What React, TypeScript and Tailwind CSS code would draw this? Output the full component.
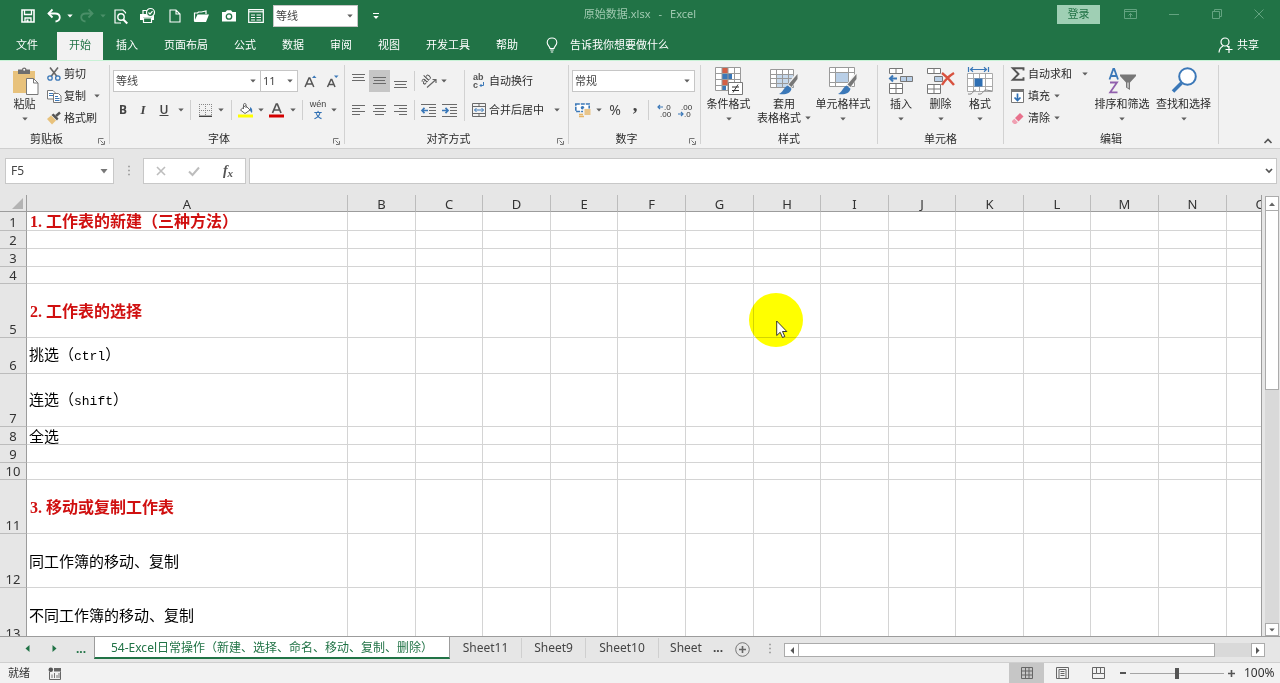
import React from "react";

type Kids = { children?: React.ReactNode };

const Caret = ({ className = "text-[#5f5f5f]" }: { className?: string }) => (
  <svg width="6" height="4" viewBox="0 0 6 4" className={`shrink-0 ${className}`} aria-hidden="true">
    <path d="M.3 .5h5.400L3 3.500z" fill="currentColor" />
  </svg>
);

const Draw = ({ w, h, children }: { w: number; h: number } & Kids) => (
  <svg width={w} height={h} viewBox={`0 0 ${w} ${h}`} fill="none" className="shrink-0 overflow-visible" aria-hidden="true">
    {children}
  </svg>
);

const Btn = ({ label, className = "", children }: { label: string; className?: string } & Kids) => (
  <button type="button" aria-label={label} className={`flex h-full shrink-0 items-center justify-center ${className}`}>
    {children}
  </button>
);

const Sep = ({ className = "mx-1" }: { className?: string }) => (
  <div className={`h-5 w-px shrink-0 bg-[#cfcfcf] ${className}`} />
);

const Divider = () => <div className="my-1 w-px shrink-0 bg-[#d2d2d2]" />;

const Combo = ({ label, value, className = "" }: { label: string; value: string; className?: string }) => (
  <div className={`relative h-[22px] shrink-0 border border-[#c6c6c6] bg-white ${className}`}>
    <select aria-label={label} className="h-full w-full appearance-none bg-transparent pl-[2px] text-[11px] leading-4 text-[#444] outline-none">
      <option>{value}</option>
    </select>
    <div className="pointer-events-none absolute inset-y-0 right-1 flex items-center">
      <Caret />
    </div>
  </div>
);

const Group = ({ label, launcher, className = "", children }: { label: string; launcher?: boolean; className?: string } & Kids) => (
  <section aria-label={label} className={`flex shrink-0 flex-col ${className}`}>
    <div className="flex min-h-0 flex-1">{children}</div>
    <div className="flex h-[18px] shrink-0 items-center">
      <span className="flex-1 text-center leading-4">{label}</span>
      {launcher && (
        <Btn label={`${label}设置`} className="w-4 pt-1">
          <Draw w={7} h={7}>
            <path d="M.5 5.500V.5h5M2.500 2.500l3 3M6.500 3v3.500H3" stroke="#777" />
          </Draw>
        </Btn>
      )}
    </div>
  </section>
);

const BigButton = ({ lines, icon, className = "" }: { lines: string[]; icon: React.ReactNode; className?: string }) => (
  <button type="button" className={`flex shrink-0 flex-col items-center pt-[6px] whitespace-nowrap ${className}`}>
    {icon}
    <span className="mt-[2px] leading-[14px]">{lines[0]}</span>
    {lines[1] ? (
      <span className="flex items-center gap-1 leading-[14px]">
        {lines[1]}
        <Caret />
      </span>
    ) : (
      <span className="mt-[6px]">
        <Caret />
      </span>
    )}
  </button>
);

/* Icons: quick access toolbar */
const SaveIcon = () => (
  <Draw w={14} h={14}>
    <path d="M1 1h12v12H1z" stroke="#fff" strokeWidth="1.600" />
    <path d="M3.500 1v4.500h7V1M4 13V9h6v4" stroke="#fff" strokeWidth="1.300" />
    <path d="M5.500 10.500h2V13h-2z" fill="#fff" />
  </Draw>
);
const UndoIcon = () => (
  <Draw w={14} h={14}>
    <path d="M1.500 4.500H8c3 0 4.800 1.600 4.800 3.800S11 12.200 8.500 12.500" stroke="#fff" strokeWidth="1.800" />
    <path d="M5.500 .5l-4 4 4 4" stroke="#fff" strokeWidth="1.800" />
  </Draw>
);
const RedoIcon = () => (
  <Draw w={14} h={14}>
    <path d="M12.500 4.500H6C3 4.500 1.200 6.100 1.200 8.300S3 12.200 5.500 12.500M8.500 .5l4 4-4 4" stroke="#4a8f68" strokeWidth="1.800" />
  </Draw>
);
const PreviewIcon = () => (
  <Draw w={14} h={15}>
    <path d="M11.500 4.500V3.500L9 1H1v13h6" stroke="#fff" strokeWidth="1.200" />
    <circle cx="7" cy="8" r="3.200" stroke="#fff" strokeWidth="1.400" />
    <path d="M9.300 10.500l4 4" stroke="#fff" strokeWidth="2" />
  </Draw>
);
const PrintIcon = () => (
  <Draw w={17} h={16}>
    <path d="M1 6h14v6h-2V9.500H4V12H1z" fill="#fff" />
    <path d="M4.500 10h8v4.500h-8zM4 6V2.500h4" fill="#217346" stroke="#fff" strokeWidth="1.200" />
    <circle cx="11.500" cy="4.500" r="4" fill="#217346" stroke="#fff" strokeWidth="1.200" />
    <path d="M9.500 4.500l1.500 1.600 2.500-3" stroke="#fff" strokeWidth="1.200" />
  </Draw>
);
const NewIcon = () => (
  <Draw w={12} h={14}>
    <path d="M1 1h6l4 4v8H1zM7 1v4h4" stroke="#fff" strokeWidth="1.100" />
  </Draw>
);
const OpenIcon = () => (
  <Draw w={17} h={13}>
    <path d="M1.500 11V3h3l1-1h3l4.500-1v3" stroke="#fff" strokeWidth="1.200" />
    <path d="M4.500 4.500H16l-3 7.500H1z" fill="#fff" />
  </Draw>
);
const CameraIcon = () => (
  <Draw w={16} h={12}>
    <path d="M1 2h3.500L6 .3h4L11.500 2H15v9.500H1z" fill="#fff" />
    <circle cx="8" cy="6.500" r="2.700" fill="#fff" stroke="#217346" strokeWidth="1.300" />
  </Draw>
);
const FormIcon = () => (
  <Draw w={16} h={14}>
    <path d="M.7.700h14.600v12.600H.7z" stroke="#fff" strokeWidth="1.200" />
    <path d="M1 2.800h14" stroke="#fff" strokeWidth="1.200" />
    <path d="M3 6h4M3 8.500h4M3 11h4M8.500 6H13M8.500 8.500H13M8.500 11H13" stroke="#fff" strokeWidth="1.200" />
  </Draw>
);

/* Icons: clipboard */
const PasteIcon = () => (
  <Draw w={26} h={28}>
    <path d="M1 4h22v22H1z" fill="#e8c27c" />
    <path d="M6 2.500h4C10-.2 14.500-.2 14.500 2.500H18V7H6z" fill="#6e6e6e" />
    <circle cx="12.200" cy="2.700" r="1" fill="#fff" />
    <path d="M14.500 11.500h7l4.500 4.500v11.500H14.500z" fill="#fff" stroke="#777" />
    <path d="M21.500 11.500V16H26" stroke="#777" />
  </Draw>
);
const CutIcon = () => (
  <Draw w={14} h={14}>
    <path d="M3 .5l7 9M11 .5l-7 9" stroke="#666" strokeWidth="1.600" />
    <circle cx="3" cy="11" r="2.200" stroke="#3b78b8" strokeWidth="1.300" />
    <circle cx="10.800" cy="11" r="2.200" stroke="#3b78b8" strokeWidth="1.300" />
  </Draw>
);
const CopyIcon = () => (
  <Draw w={15} h={13}>
    <path d="M.5.500H6L8 2.500V9H.5z" fill="#fff" stroke="#777" />
    <path d="M2 3.500h4M2 5.500h4" stroke="#3b78b8" />
    <path d="M6.500 3.500h5l2.500 2.500v6.500H6.500z" fill="#fff" stroke="#777" />
    <path d="M8 6.500h3M8 8.500h4.500M8 10.500h4.500" stroke="#3b78b8" />
  </Draw>
);
const BrushIcon = () => (
  <Draw w={14} h={13}>
    <path d="M0 7l4-3.500 5 5-4 4z" fill="#e8c27c" />
    <path d="M4.500 3l2-1.500 5 5L10 8.500z" fill="#555" />
    <path d="M9 4l4-3.500" stroke="#555" strokeWidth="2.400" />
  </Draw>
);

/* Icons: font */
const BorderIcon = () => (
  <Draw w={13} h={13}>
    <path d="M.5 0v12M12.500 0v12M6.500 0v12M0 .5h13M0 6.500h13" stroke="#888" strokeDasharray="1 1" />
    <path d="M0 12.300h13" stroke="#444" strokeWidth="1.400" />
  </Draw>
);
const FillIcon = () => (
  <Draw w={16} h={15}>
    <path d="M2.500 7l5-4.500 4.500 4.500-5 3.500z" fill="#fff" stroke="#666" />
    <path d="M5.500 6V1.500c0-1.300 2.500-1.300 2.500 0V5" stroke="#666" />
    <path d="M12 4c2.200 1 2.600 3 2 6-1.200-.8-1.800-2-2-3z" fill="#3b78b8" />
    <path d="M0 11.500h15v3H0z" fill="#ffff00" />
  </Draw>
);
const FontColorIcon = () => (
  <Draw w={16} h={15}>
    <path d="M3.500 10L7.300 1h1L12 10M5 7h5.600" stroke="#555" strokeWidth="1.700" />
    <path d="M0 11.500h15v3H0z" fill="#d40000" />
  </Draw>
);

/* Icons: alignment */
const Lines = ({ spans, h }: { spans: [number, number][]; h: number }) => (
  <Draw w={13} h={h}>
    {spans.map(([a, b], i) => (
      <path key={i} d={`M${a} ${i * 3 + 1.5}H${b}`} stroke="#6a6a6a" />
    ))}
  </Draw>
);
const OrientIcon = () => (
  <Draw w={18} h={18}>
    <g transform="rotate(-45 7 9)">
      <text x="2" y="10" fontSize="10" fontFamily="Liberation Sans" fill="#444">ab</text>
    </g>
    <path d="M7 15.500l9-8M12.500 7.500H16V11" stroke="#666" strokeWidth="1.200" />
  </Draw>
);
const Indent = ({ out }: { out?: boolean }) => (
  <Draw w={15} h={13}>
    <path d="M0 .5h15M8 3.500h7M8 6.500h7M8 9.500h7M0 12.500h15" stroke="#6a6a6a" />
    <path d={out ? "M7 6.500H1M3.500 3.800L1 6.500l2.500 2.700" : "M0 6.500h6M3.500 3.800L6 6.500 3.500 9.200"} stroke="#3b78b8" strokeWidth="1.700" />
  </Draw>
);
const WrapIcon = () => (
  <Draw w={13} h={20}>
    <text x="1" y="9" fontSize="9" fontFamily="Liberation Sans" fontWeight="600" fill="#555">ab</text>
    <text x="1" y="17" fontSize="9" fontFamily="Liberation Sans" fontWeight="600" fill="#555">c</text>
    <path d="M11.500 11v3.500H8M9.500 13L8 14.500 9.500 16" stroke="#3b78b8" />
  </Draw>
);
const MergeIcon = () => (
  <Draw w={14} h={14}>
    <path d="M.5.500h13v13H.5zM.5 3.500h13M.5 10.500h13M7 .5v3M7 10.500v3" stroke="#6a6a6a" />
    <path d="M2.500 7h9M4.500 5L2.500 7l2 2M9.500 5l2 2-2 2" stroke="#3b78b8" />
  </Draw>
);

/* Icons: number */
const MoneyIcon = () => (
  <Draw w={16} h={15}>
    <path d="M.8 1h13.400v7.500H.8z" fill="#fff" stroke="#3b78b8" strokeWidth="1.600" strokeDasharray="4 1" />
    <circle cx="7.500" cy="4.700" r="1.800" fill="#3b78b8" />
    <path d="M8 5.500h8V14H8zM3 9.800h5V15H3z" fill="#f2f2f2" />
    <path d="M9.500 7h6M9.500 9h6M9.500 11h6M4 11.500h4M4 13.500h5" stroke="#e5b567" strokeWidth="1.400" />
  </Draw>
);
const Decimal = ({ less }: { less?: boolean }) => (
  <Draw w={15} h={17}>
    <text x={less ? 3 : 7} y="8" fontSize="8" fontFamily="Liberation Sans" fill="#333">{less ? ".00" : ".0"}</text>
    <text x={less ? 6 : 3} y="15" fontSize="8" fontFamily="Liberation Sans" fill="#333">{less ? ".0" : ".00"}</text>
    <path d={less ? "M0 12h5M3 10l2 2-2 2" : "M6 5H1M3 3L1 5l2 2"} stroke="#3b78b8" strokeWidth="1.200" />
  </Draw>
);

/* Icons: styles and cells */
const CondIcon = () => (
  <Draw w={28} h={28}>
    <path d="M.5.500h25v23H.5z" fill="#fff" />
    <path d="M7 1h6v5H7zM7 13h6v5H7z" fill="#d35f45" />
    <path d="M7 7h10v5H7zM7 19h4v5H7z" fill="#3b78b8" />
    <path d="M.5.500h25v23H.5zM7 .5v23M19.500 .5v23M.5 6.500h25M.5 12.500h25M.5 18.500h25M13 .5v23" stroke="#9a9a9a" />
    <path d="M13.500 15.500h14v12h-14z" fill="#fff" stroke="#777" />
    <path d="M17 20h7M17 23.500h7M23 17.500l-5 8" stroke="#333" />
  </Draw>
);
const BigBrush = () => (
  <>
    <path d="M27 8.500l-7.500 11" stroke="#f2f2f2" strokeWidth="5" />
    <path d="M27.500 7v5l-6 8-3-2.500z" fill="#777" />
    <path d="M17.500 18.500l4 3.200c-1 4.800-6 6.300-12.500 5.300 4-1.500 4.500-6.500 8.500-8.500z" fill="#3b78b8" />
  </>
);
const TableStyleIcon = () => (
  <Draw w={28} h={28}>
    <path d="M.5 2.500h23v18H.5z" fill="#fff" />
    <path d="M6 7h18v14H6z" fill="#c7d9ec" />
    <path d="M.5 2.500h23v18H.5zM6.500 2.500v18M12.500 2.500v18M18.500 2.500v18M.5 7.500h23M.5 11.500h23M.5 16.500h23" stroke="#999" />
    <BigBrush />
  </Draw>
);
const CellStyleIcon = () => (
  <Draw w={28} h={28}>
    <path d="M.5.500h25v19H.5z" fill="#fff" />
    <path d="M.5.500h25v19H.5zM6.500 .5v19M19.500 .5v19M.5 5.500h25M.5 15.500h25" stroke="#9a9a9a" />
    <path d="M6.500 5.500h13v10h-13z" fill="#b9cfe7" stroke="#9a9a9a" />
    <BigBrush />
  </Draw>
);
const InsertIcon = () => (
  <Draw w={26} h={28}>
    <path d="M1.500 1.500h13v5h-13zM8 1.500v5M1.500 16.500h13v10h-13zM8 16.500v10M1.500 21.500h13" fill="#fff" stroke="#777" />
    <path d="M12.500 9.500h12v5h-12zM18.500 9.500v5" fill="#b9cfe7" stroke="#777" />
    <path d="M9 11.500H2.500M5 8.500l-3 3 3 3" stroke="#3b78b8" strokeWidth="2" />
  </Draw>
);
const DeleteIcon = () => (
  <Draw w={28} h={28}>
    <path d="M.5 1.500h13v5H.5zM7 1.500v5M.5 17.500h13v9H.5zM7 17.500v9M.5 22h13" fill="#fff" stroke="#777" />
    <path d="M7.500 9.500h8v5h-8z" fill="#b9cfe7" stroke="#777" />
    <path d="M15 6c4 3 8 7 12 12M27 6c-5 3-9 7-12 12" stroke="#d8523f" strokeWidth="2.400" />
  </Draw>
);
const FormatIcon = () => (
  <Draw w={28} h={28}>
    <path d="M2.500 0v5M22.500 0v5M4 2.500h17M7 .3L4.500 2.500 7 4.700M18 .3l2.500 2.200L18 4.700" stroke="#3b78b8" strokeWidth="1.200" />
    <path d="M1.500 6.500h25v18h-25z" fill="#fff" />
    <path d="M1.500 6.500h25v18h-25zM7.500 6.500v18M19.500 6.500v18M13.500 6.500v18M1.500 11.500h25M1.500 19.500h25" stroke="#aaa" />
    <path d="M8.500 11.500h8v8h-8z" fill="#2f6fb3" />
    <path d="M2 27c6 1 4-4 8-4M12 27c6 1 4-4 8-4l6 1" stroke="#888" />
  </Draw>
);

/* Icons: editing */
const SumIcon = () => (
  <Draw w={14} h={14}>
    <path d="M12.500 3.500V1.200H1.800L7.500 7l-5.700 5.800h10.700v-2.500" stroke="#555" strokeWidth="1.900" />
  </Draw>
);
const DownIcon = () => (
  <Draw w={13} h={14}>
    <path d="M.5.500h12v13H.5z" fill="#fff" stroke="#777" />
    <path d="M0 0h13v3H0z" fill="#777" />
    <path d="M6.500 4.500v7M3.500 8.500l3 3 3-3" stroke="#2f6fb3" strokeWidth="1.700" />
  </Draw>
);
const EraserIcon = () => (
  <Draw w={14} h={13}>
    <path d="M4 6l5-5 3.500 3.500-5 5z" fill="#e8718c" />
    <path d="M3.300 6.700l3.500 3.500L5 12H3L1 10V9z" fill="#f0a0b2" />
  </Draw>
);
const SortIcon = () => (
  <Draw w={28} h={28}>
    <path d="M1.500 12.500L5.300 2h.9L10 12.500M2.800 9h6" stroke="#3b78b8" strokeWidth="1.800" />
    <path d="M2 15.500h7L2.200 25.300h7.300" stroke="#9160ad" strokeWidth="1.800" />
    <path d="M12 7.500h16V9l-6 6.500V23l-4-2.500v-5L12 9z" fill="#777" />
    <path d="M19.500 15.500v5l1 .6v-5.600z" fill="#fff" />
  </Draw>
);
const FindIcon = () => (
  <Draw w={28} h={28}>
    <path d="M11.500 16L3 24.500" stroke="#3b78b8" strokeWidth="3.600" />
    <circle cx="17.500" cy="9.500" r="8.300" fill="#fff" stroke="#3b78b8" strokeWidth="2" />
  </Draw>
);

const menuTabs = ["插入", "页面布局", "公式", "数据", "审阅", "视图", "开发工具", "帮助"];

const W68 = "w-[68px]";
const W67 = "w-[67px]";
const columns: [string, string][] = [
  ["A", "w-[321px]"], ["B", W68], ["C", W67], ["D", W68], ["E", W67], ["F", W68], ["G", W68], ["H", W67],
  ["I", W68], ["J", W67], ["K", W68], ["L", W67], ["M", W68], ["N", W68], ["O", W68],
];

const SHORT = "h-[18px]";
const TALL = "h-[54px]";
type Row = { h: string; head?: [string, string]; text?: React.ReactNode };
const Latin = ({ children }: Kids) => <span className="font-['Liberation_Mono',monospace] text-[13px]">{children}</span>;
const rows: Row[] = [
  { h: SHORT, head: ["1. ", "工作表的新建（三种方法）"] },
  { h: SHORT },
  { h: SHORT },
  { h: "h-[17px]" },
  { h: TALL, head: ["2. ", "工作表的选择"] },
  { h: "h-[36px]", text: <>挑选（<Latin>ctrl</Latin>）</> },
  { h: "h-[53px]", text: <>连选（<Latin>shift</Latin>）</> },
  { h: SHORT, text: "全选" },
  { h: SHORT },
  { h: "h-[17px]" },
  { h: TALL, head: ["3. ", "移动或复制工作表"] },
  { h: TALL, text: "同工作簿的移动、复制" },
  { h: TALL, text: "不同工作簿的移动、复制" },
];

function TitleBar() {
  return (
    <header className="grid h-8 shrink-0 grid-cols-[1fr_auto_1fr] text-[#9fc9b0]">
      <div className="flex items-center pl-[14px]">
        <Btn label="保存" className="w-[27px]"><SaveIcon /></Btn>
        <Btn label="撤消" className="w-[25px]"><UndoIcon /></Btn>
        <Btn label="撤消列表" className="w-2"><Caret className="text-white" /></Btn>
        <Btn label="恢复" className="w-[25px]"><RedoIcon /></Btn>
        <Btn label="恢复列表" className="w-2"><Caret className="text-[#4a8f68]" /></Btn>
        <Btn label="打印预览" className="w-[27px]"><PreviewIcon /></Btn>
        <Btn label="快速打印" className="w-[27px]"><PrintIcon /></Btn>
        <Btn label="新建" className="w-[27px]"><NewIcon /></Btn>
        <Btn label="打开" className="w-[27px]"><OpenIcon /></Btn>
        <Btn label="照相机" className="w-[27px]"><CameraIcon /></Btn>
        <Btn label="记录单" className="w-[27px]"><FormIcon /></Btn>
        <Combo label="快速字体" value="等线" className="ml-1 w-[85px]" />
        <Btn label="自定义快速访问工具栏" className="w-9">
          <Draw w={6} h={6}>
            <path d="M0 .5h6" stroke="#fff" />
            <path d="M.3 3h5.400L3 6z" fill="#fff" />
          </Draw>
        </Btn>
      </div>
      <h1 className="flex items-center gap-2 pb-1 text-[11px]">
        <span>原始数据.xlsx</span>
        <span>-</span>
        <span>Excel</span>
      </h1>
      <div className="flex items-center justify-end pb-1">
        <button type="button" className="mr-2 h-[19px] w-[43px] bg-[#9fcfb4] text-[11px] text-[#217346]">登录</button>
        <Btn label="功能区显示选项" className="w-[44px]">
          <Draw w={13} h={10}>
            <path d="M.5.500h12v9H.5zM.5 2.500h12M6.500 8.500V4.500M4.500 6.500l2-2 2 2" stroke="#63a380" />
          </Draw>
        </Btn>
        <Btn label="最小化" className="w-[43px]">
          <Draw w={10} h={1}><path d="M0 .5h10" stroke="#63a380" /></Draw>
        </Btn>
        <Btn label="向下还原" className="w-[43px]">
          <Draw w={10} h={10}><path d="M.5 2.500h7v7h-7zM2.500 2.500v-2h7v7h-2" stroke="#63a380" /></Draw>
        </Btn>
        <Btn label="关闭" className="w-[42px]">
          <Draw w={10} h={10}><path d="M.5.500l9 9M9.500 .5l-9 9" stroke="#63a380" /></Draw>
        </Btn>
      </div>
    </header>
  );
}

function MenuTabs() {
  return (
    <nav className="flex h-7 shrink-0 items-center pb-[2px] text-white">
      <button type="button" className="w-[57px] pr-[3px]">文件</button>
      <button type="button" className="-mb-[2px] h-7 w-[46px] bg-[#f2f2f2] pb-[2px] text-[#217346]">开始</button>
      {menuTabs.map((t) => (
        <button type="button" key={t} className="px-[13px]">{t}</button>
      ))}
      <button type="button" className="flex items-center gap-3 pl-[15px]">
        <Draw w={12} h={16}>
          <path d="M4 11.500c0-2-2.800-3-2.800-6C1.200 2.800 3.400 1 6 1s4.800 1.800 4.800 4.500c0 3-2.800 4-2.800 6zM4.200 13h3.600M4.800 15h2.400" stroke="#fff" strokeWidth="1.100" />
        </Draw>
        告诉我你想要做什么
      </button>
      <button type="button" className="ml-auto flex items-center gap-1 pr-[21px]">
        <Draw w={15} h={16}>
          <circle cx="7" cy="5" r="4" stroke="#fff" strokeWidth="1.200" />
          <path d="M1 15.500c.3-3.500 2-5.500 4-6.500M9 9l2 1.500M7.500 12.500h7M11 9v7" stroke="#fff" strokeWidth="1.200" />
        </Draw>
        共享
      </button>
    </nav>
  );
}

function Ribbon() {
  return (
    <div className="flex h-[89px] shrink-0 border-t border-b border-t-[#c8f2d6] border-b-[#cfcfcf] bg-[#f2f2f2] text-[#2b2b2b]">
      <Group label="剪贴板" launcher className="w-[109px]">
        <BigButton lines={["粘贴"]} icon={<PasteIcon />} className="w-[47px] pl-[2px]" />
        <div className="flex flex-col pt-[2px]">
          {([["剪切", <CutIcon />], ["复制", <CopyIcon />], ["格式刷", <BrushIcon />]] as [string, React.ReactNode][]).map(([t, icon]) => (
            <button type="button" key={t} className="flex h-[22px] items-center whitespace-nowrap">
              <span className="flex w-[17px]">{icon}</span>
              {t}
              {t === "复制" && <span className="ml-2"><Caret /></span>}
            </button>
          ))}
        </div>
      </Group>
      <Divider />
      <Group label="字体" launcher className="w-[234px]">
        <div className="flex flex-col gap-[7px] pt-[9px] pl-[3px]">
          <div className="flex h-[22px] items-center">
            <Combo label="字体名称" value="等线" className="w-[148px]" />
            <Combo label="字号" value="11" className="-ml-px w-[38px]" />
            <Btn label="增大字号" className="w-6">
              <Draw w={13} h={14}>
                <path d="M1 13L5 4h.8l4 9M2.500 10h5.800" stroke="#555" strokeWidth="1.500" />
                <path d="M8 4l2.200-2.500L12.500 4z" fill="#3b78b8" />
              </Draw>
            </Btn>
            <Btn label="减小字号" className="w-[20px]">
              <Draw w={13} h={14}>
                <path d="M1.500 13L5 5.500h.8L9 13M2.800 10.500h5" stroke="#555" strokeWidth="1.500" />
                <path d="M8 1.500h4.500L10.200 4z" fill="#3b78b8" />
              </Draw>
            </Btn>
          </div>
          <div className="flex h-[22px] items-center text-[12px] text-[#444]">
            <Btn label="加粗" className="w-5"><b>B</b></Btn>
            <Btn label="倾斜" className="w-5"><i className="font-['Liberation_Serif',serif] text-[13px] font-bold">I</i></Btn>
            <Btn label="下划线" className="w-[22px]"><span className="font-semibold underline">U</span></Btn>
            <Btn label="下划线样式" className="w-[11px]"><Caret /></Btn>
            <Sep />
            <Btn label="边框" className="w-5"><BorderIcon /></Btn>
            <Btn label="边框样式" className="w-3"><Caret /></Btn>
            <Sep />
            <Btn label="填充颜色" className="w-5"><FillIcon /></Btn>
            <Btn label="填充颜色列表" className="w-[10px]"><Caret /></Btn>
            <Btn label="字体颜色" className="w-[22px]"><FontColorIcon /></Btn>
            <Btn label="字体颜色列表" className="w-[10px]"><Caret /></Btn>
            <Sep />
            <Btn label="拼音指南" className="w-[22px] flex-col">
              <span className="font-['Liberation_Sans',sans-serif] text-[9px] leading-[10px]">wén</span>
              <span className="text-[8px] leading-[12px] font-bold text-[#2f6fb3]">文</span>
            </Btn>
            <Btn label="拼音列表" className="w-[10px]"><Caret /></Btn>
          </div>
        </div>
      </Group>
      <Divider />
      <Group label="对齐方式" launcher className="w-[223px]">
        <div className="flex flex-col gap-[7px] pt-[9px] pl-[3px]">
          <div className="flex h-[22px] items-center">
            <Btn label="顶端对齐" className="w-[21px] pb-2"><Lines h={9} spans={[[0, 13], [1, 12], [0, 13]]} /></Btn>
            <Btn label="垂直居中" className="w-[21px] bg-[#c6c6c6] pb-[2px]"><Lines h={9} spans={[[0, 13], [1, 12], [0, 13]]} /></Btn>
            <Btn label="底端对齐" className="w-[21px] pt-[6px]"><Lines h={9} spans={[[0, 13], [1, 12], [0, 13]]} /></Btn>
            <Sep className="mx-[3px]" />
            <Btn label="方向" className="w-[22px]"><OrientIcon /></Btn>
            <Btn label="方向列表" className="w-2"><Caret /></Btn>
          </div>
          <div className="flex h-[22px] items-center">
            <Btn label="左对齐" className="w-[21px]"><Lines h={12} spans={[[0, 13], [0, 8], [0, 13], [0, 8]]} /></Btn>
            <Btn label="居中" className="w-[21px]"><Lines h={12} spans={[[0, 13], [2, 11], [0, 13], [2, 11]]} /></Btn>
            <Btn label="右对齐" className="w-[21px]"><Lines h={12} spans={[[0, 13], [5, 13], [0, 13], [5, 13]]} /></Btn>
            <Sep className="mx-[3px]" />
            <Btn label="减少缩进量" className="w-[21px]"><Indent out /></Btn>
            <Btn label="增加缩进量" className="w-[21px]"><Indent /></Btn>
          </div>
        </div>
        <div className="mt-[9px] ml-1 h-[51px] w-px bg-[#d2d2d2]" />
        <div className="flex flex-col gap-[7px] pt-[9px] pl-[3px]">
          <button type="button" className="flex h-[22px] items-center whitespace-nowrap">
            <span className="flex w-[21px] justify-center"><WrapIcon /></span>
            自动换行
          </button>
          <button type="button" className="flex h-[22px] items-center whitespace-nowrap">
            <span className="flex w-[21px] justify-center"><MergeIcon /></span>
            合并后居中
            <span className="ml-[10px]"><Caret /></span>
          </button>
        </div>
      </Group>
      <Divider />
      <Group label="数字" launcher className="w-[131px]">
        <div className="flex flex-col gap-[7px] pt-[9px] pl-[3px]">
          <Combo label="数字格式" value="常规" className="w-[123px]" />
          <div className="flex h-[22px] items-center text-[#444]">
            <Btn label="会计数字格式" className="w-[22px]"><MoneyIcon /></Btn>
            <Btn label="会计格式列表" className="w-[9px]"><Caret /></Btn>
            <Btn label="百分比样式" className="w-6 text-[14px]">%</Btn>
            <Btn label="千位分隔样式" className="w-4 pb-[10px] font-['Liberation_Serif',serif] text-[19px] leading-4 font-bold">,</Btn>
            <Sep className="mx-[5px]" />
            <Btn label="增加小数位数" className="w-5"><Decimal /></Btn>
            <Btn label="减少小数位数" className="w-[22px]"><Decimal less /></Btn>
          </div>
        </div>
      </Group>
      <Divider />
      <Group label="样式" className="w-[176px]">
        <BigButton lines={["条件格式"]} icon={<CondIcon />} className="w-[55px]" />
        <BigButton lines={["套用", "表格格式"]} icon={<TableStyleIcon />} className="w-[56px]" />
        <BigButton lines={["单元格样式"]} icon={<CellStyleIcon />} className="w-[62px]" />
      </Group>
      <Divider />
      <Group label="单元格" className="w-[125px]">
        <BigButton lines={["插入"]} icon={<InsertIcon />} className="ml-[3px] w-10" />
        <BigButton lines={["删除"]} icon={<DeleteIcon />} className="w-[39px]" />
        <BigButton lines={["格式"]} icon={<FormatIcon />} className="w-10" />
      </Group>
      <Divider />
      <Group label="编辑" className="w-[214px]">
        <div className="flex w-[89px] flex-col pt-[2px] pl-[7px]">
          {([["自动求和", <SumIcon />], ["填充", <DownIcon />], ["清除", <EraserIcon />]] as [string, React.ReactNode][]).map(([t, icon], i) => (
            <button type="button" key={t} className="flex h-[22px] items-center whitespace-nowrap">
              <span className="flex w-[17px]">{icon}</span>
              {t}
              <span className={i === 0 ? "ml-[10px]" : "ml-1"}><Caret /></span>
            </button>
          ))}
        </div>
        <BigButton lines={["排序和筛选"]} icon={<SortIcon />} className="w-[58px]" />
        <BigButton lines={["查找和选择"]} icon={<FindIcon />} className="ml-[3px] w-[59px]" />
      </Group>
      <Divider />
      <div className="flex flex-1 items-end justify-end pr-2 pb-1">
        <button type="button" aria-label="折叠功能区">
          <Draw w={8} h={6}><path d="M.5 5L4 1.500 7.500 5" stroke="#555" strokeWidth="1.600" /></Draw>
        </button>
      </div>
    </div>
  );
}

function FormulaBar() {
  return (
    <div className="flex h-[46px] shrink-0 items-start bg-[#e6e6e6] pt-[9px] pr-[3px] pl-[5px]">
      <div className="flex h-[26px] w-[109px] items-center border border-[#c8c8c8] bg-white">
        <input aria-label="名称框" defaultValue="F5" className="w-0 flex-1 bg-transparent pl-[5px] text-[12px] text-[#444] outline-none" />
        <button type="button" aria-label="名称列表" className="flex w-[18px] justify-center">
          <svg width="8" height="5" viewBox="0 0 8 5" aria-hidden="true"><path d="M.5 0h7L4 4.500z" fill="#777" /></svg>
        </button>
      </div>
      <div className="flex h-[26px] w-[29px] items-center justify-center">
        <Draw w={2} h={12}><path d="M0 1.500h2M0 5.500h2M0 9.500h2" stroke="#a5a5a5" strokeWidth="1.600" /></Draw>
      </div>
      <div className="flex h-[26px] w-[103px] items-center border border-[#c8c8c8] bg-white">
        <Btn label="取消" className="w-[33px]">
          <Draw w={10} h={10}><path d="M1 1l8 8M9 1L1 9" stroke="#bdbdbd" strokeWidth="1.600" /></Draw>
        </Btn>
        <Btn label="输入" className="w-[34px]">
          <Draw w={12} h={10}><path d="M1 5.500L4.500 9 11 1.500" stroke="#bdbdbd" strokeWidth="2" /></Draw>
        </Btn>
        <Btn label="插入函数" className="w-[34px] font-['Liberation_Serif',serif] text-[#555] italic">
          <span className="text-[14px] font-bold">f</span>
          <span className="pt-1 text-[11px] font-bold">x</span>
        </Btn>
      </div>
      <div className="ml-[3px] flex h-[26px] min-w-0 flex-1 items-center border border-[#c8c8c8] bg-white">
        <input aria-label="编辑栏" className="min-w-0 flex-1 bg-transparent px-1 outline-none" />
        <button type="button" aria-label="展开编辑栏" className="flex w-[14px] justify-center">
          <Draw w={8} h={6}><path d="M1 1l3 3 3-3" stroke="#555" strokeWidth="1.700" /></Draw>
        </button>
      </div>
    </div>
  );
}

function Sheet() {
  return (
    <div className="relative flex min-h-0 flex-1 overflow-hidden bg-[#e6e6e6]">
      <div className="min-w-0 flex-1 overflow-hidden border-r border-[#9c9c9c]">
        <table className="w-[1295px] table-fixed border-separate border-spacing-0 bg-white font-['Noto_Sans','Noto_Sans_CJK_SC',sans-serif]">
          <colgroup>
            <col className="w-[27px]" />
            {columns.map(([c, w]) => <col key={c} className={w} />)}
          </colgroup>
          <thead>
            <tr className="h-[17px] bg-[#e6e6e6] text-[13px] leading-[14px] text-[#333]">
              <td className="border-r border-b border-[#9c9c9c] p-0 pr-[3px]">
                <div className="flex justify-end">
                  <Draw w={11} h={11}><path d="M11 0v11H0z" fill="#b3b3b3" /></Draw>
                </div>
              </td>
              {columns.map(([c]) => (
                <th key={c} scope="col" className="border-r border-b border-r-[#bcbcbc] border-b-[#9c9c9c] p-0 text-center align-bottom font-normal">{c}</th>
              ))}
            </tr>
          </thead>
          <tbody>
            {rows.map((r, i) => (
              <tr key={i} className={r.h}>
                <th scope="row" className="border-r border-b border-r-[#9c9c9c] border-b-[#bcbcbc] bg-[#e6e6e6] p-0 text-center align-bottom text-[13px] leading-4 font-normal text-[#333]">
                  {i + 1}
                </th>
                {columns.map(([c], k) => (
                  <td key={c} className={`border-r border-b border-[#d4d4d4] p-0 pl-[2px] align-middle text-[15px] leading-4 whitespace-nowrap text-black ${r.head ? "pt-px" : ""}`}>
                    {k === 0 && r.head && (
                      <span className="pl-px font-['Liberation_Serif','Noto_Sans_CJK_SC',serif] text-[16px] font-bold whitespace-pre text-[#d01010]">
                        {r.head[0]}{r.head[1]}
                      </span>
                    )}
                    {k === 0 && r.text}
                  </td>
                ))}
              </tr>
            ))}
          </tbody>
        </table>
      </div>
      <div className="mt-px mr-px ml-[3px] flex w-[14px] shrink-0 flex-col bg-[#d9d9d9]">
        <button type="button" aria-label="向上滚动" className="flex h-[15px] items-center justify-center border border-[#ababab] bg-white">
          <Draw w={6} h={4}><path d="M0 4h6L3 .5z" fill="#666" /></Draw>
        </button>
        <div className="h-[179px] border border-t-0 border-[#ababab] bg-white" />
        <button type="button" aria-label="向下滚动" className="mt-auto flex h-[13px] items-center justify-center border border-[#ababab] bg-white">
          <Caret />
        </button>
      </div>
      <div className="pointer-events-none absolute top-[98px] left-[749px] size-[54px] rounded-full bg-[#ffff00] mix-blend-multiply" />
      <div className="pointer-events-none absolute top-[125px] left-[776px]">
        <Draw w={12} h={19}>
          <path d="M.7 1v14.500l3.500-3.200 2.300 5.200 2.300-1-2.300-5h4.300z" fill="#fff" stroke="#222" strokeWidth=".9" />
        </Draw>
      </div>
    </div>
  );
}

function SheetTabs() {
  return (
    <div className="flex h-[26px] shrink-0 items-start border-t border-[#9c9c9c] bg-[#e6e6e6] text-[12px] text-[#444]">
      <div className="flex h-[23px] w-[94px] shrink-0 items-center pl-[14px]">
        <Btn label="上一张工作表" className="w-[27px]"><Draw w={5} h={7}><path d="M4.500 0v7L.5 3.500z" fill="#217346" /></Draw></Btn>
        <Btn label="下一张工作表" className="w-[27px]"><Draw w={5} h={7}><path d="M.5 0v7l4-3.500z" fill="#217346" /></Draw></Btn>
        <Btn label="更多工作表" className="w-[26px] font-bold text-[#217346]">...</Btn>
      </div>
      <button type="button" className="h-[22px] w-[356px] shrink-0 border-x border-b-2 border-x-[#9c9c9c] border-b-[#217346] bg-white pt-px whitespace-nowrap text-[#217346]">
        54-Excel日常操作（新建、选择、命名、移动、复制、删除）
      </button>
      <div className="flex h-[22px] items-center">
        <button type="button" className="w-[71px]">Sheet11</button>
        <Sep className="mx-0" />
        <button type="button" className="w-[63px]">Sheet9</button>
        <Sep className="mx-0" />
        <button type="button" className="w-[72px]">Sheet10</button>
        <Sep className="mx-0" />
        <button type="button" className="w-[54px]">Sheet</button>
        <span className="font-bold">...</span>
      </div>
      <Btn label="新工作表" className="ml-[6px] h-6 w-[26px]">
        <Draw w={15} h={15}>
          <circle cx="7.500" cy="7.500" r="6.800" stroke="#777" />
          <path d="M7.500 4v7M4 7.500h7" stroke="#666" strokeWidth="1.600" />
        </Draw>
      </Btn>
      <div className="flex h-6 w-[29px] shrink-0 items-center justify-center">
        <Draw w={2} h={12}><path d="M0 1.500h2M0 5.500h2M0 9.500h2" stroke="#a5a5a5" strokeWidth="1.600" /></Draw>
      </div>
      <div className="mt-[6px] mr-[15px] flex h-[14px] min-w-0 flex-1 bg-[#d9d9d9]">
        <Btn label="向左滚动" className="w-[15px] border border-[#ababab] bg-white"><Draw w={4} h={7}><path d="M4 0v7L.5 3.500z" fill="#555" /></Draw></Btn>
        <div className="flex-1 border border-l-0 border-[#ababab] bg-white" />
        <Btn label="向右滚动" className="ml-9 w-[14px] border border-[#ababab] bg-white"><Draw w={4} h={7}><path d="M0 0v7l3.500-3.500z" fill="#555" /></Draw></Btn>
      </div>
    </div>
  );
}

function StatusBar() {
  return (
    <footer className="flex h-[21px] shrink-0 items-center border-t border-[#cfcfcf] bg-[#f2f2f2] text-[#333]">
      <span className="pl-2">就绪</span>
      <Btn label="宏录制" className="ml-[14px] w-5">
        <Draw w={13} h={13}>
          <path d="M1.500 5v7.500h11v-8" stroke="#666" />
          <path d="M6 1h7v3.500H6z" fill="#666" />
          <circle cx="2.800" cy="2.800" r="2.300" fill="#555" />
          <path d="M4 11V7.500M6.500 11V6M9 11V8M11 11V6" stroke="#777" />
        </Draw>
      </Btn>
      <div className="ml-auto flex h-full items-center">
        <Btn label="普通" className="w-[35px] bg-[#c6c6c6]">
          <Draw w={12} h={12}><path d="M.5.500h11v11H.5zM4.500 .5v11M8 .5v11M.5 4h11M.5 8h11" stroke="#666" /></Draw>
        </Btn>
        <Btn label="页面布局视图" className="w-9">
          <Draw w={13} h={12}><path d="M.5.500h12v11H.5zM3 2.500h7v9H3zM4.500 4.500h4M4.500 6.500h4M4.500 8.500h4" stroke="#666" /></Draw>
        </Btn>
        <Btn label="分页预览" className="w-9">
          <Draw w={13} h={12}><path d="M.5.500h12v11H.5zM4.500 .5v6h4v-6M.5 6.500h4M8.500 6.500h4" stroke="#666" /></Draw>
        </Btn>
        <Btn label="缩小" className="w-[14px]"><Draw w={6} h={2}><path d="M0 1h6" stroke="#555" strokeWidth="2" /></Draw></Btn>
        <input
          type="range"
          aria-label="显示比例"
          min="0"
          max="200"
          defaultValue="100"
          className="h-4 w-[94px] appearance-none bg-transparent [&::-webkit-slider-runnable-track]:h-px [&::-webkit-slider-runnable-track]:bg-[#a5a5a5] [&::-webkit-slider-thumb]:-mt-[5px] [&::-webkit-slider-thumb]:h-[11px] [&::-webkit-slider-thumb]:w-[4px] [&::-webkit-slider-thumb]:appearance-none [&::-webkit-slider-thumb]:bg-[#555]"
        />
        <Btn label="放大" className="w-[14px]"><Draw w={7} h={7}><path d="M0 3.500h7M3.500 0v7" stroke="#555" strokeWidth="1.600" /></Draw></Btn>
        <span className="w-[42px] pl-[6px] text-[12px]">100%</span>
      </div>
    </footer>
  );
}

export default function App() {
  return (
    <main className="flex h-screen flex-col overflow-hidden bg-[#217346] font-['Noto_Sans','Noto_Sans_CJK_SC',sans-serif] text-[11px] leading-4">
      <TitleBar />
      <MenuTabs />
      <Ribbon />
      <FormulaBar />
      <Sheet />
      <SheetTabs />
      <StatusBar />
    </main>
  );
}
